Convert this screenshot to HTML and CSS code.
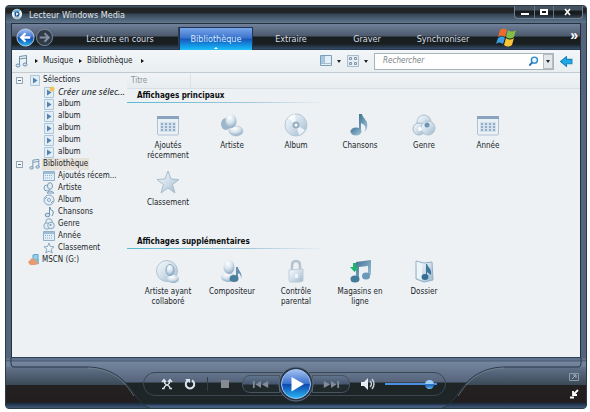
FILE: index.html
```html
<!DOCTYPE html>
<html lang="fr">
<head>
<meta charset="utf-8">
<title>Lecteur Windows Media</title>
<link rel="stylesheet" href="styles.css">
</head>
<body>
<svg class="defs" aria-hidden="true">
  <defs>
    <linearGradient id="pale" x1="0" y1="0" x2="1" y2="1"><stop offset="0" stop-color="#f8fcfe"/><stop offset=".5" stop-color="#d0deea"/><stop offset="1" stop-color="#9bb8ce"/></linearGradient>
    <linearGradient id="steel" x1="0" y1="0" x2="1" y2="1"><stop offset="0" stop-color="#3f7292"/><stop offset="1" stop-color="#a5c8de"/></linearGradient>
    <radialGradient id="ball" cx=".4" cy=".25" r=".8"><stop offset="0" stop-color="#fff"/><stop offset=".5" stop-color="#d5e2ec"/><stop offset="1" stop-color="#84a2bc"/></radialGradient>
    <linearGradient id="orb" x1="0" y1="0" x2="0" y2="1"><stop offset="0" stop-color="#a3c1f2"/><stop offset=".48" stop-color="#3c72cf"/><stop offset=".52" stop-color="#0d48b0"/><stop offset="1" stop-color="#28baf5"/></linearGradient>
    <linearGradient id="corner" x1="0" y1="0" x2="0" y2="1"><stop offset="0" stop-color="#62728a"/><stop offset=".42" stop-color="#3c4a57"/><stop offset=".43" stop-color="#242122"/><stop offset=".84" stop-color="#221e20"/><stop offset=".87" stop-color="#1d2f48"/><stop offset="1" stop-color="#4a607e"/></linearGradient>
    <symbol id="calendar" viewBox="0 0 24 24"><rect x="1.500" y="4" width="21" height="18" rx="1" fill="#e9f0f6" stroke="#b2c2d1"/><path d="M1 3h22v3H1z" fill="#8ba3bc"/><path d="M4 9h16v10H4z" fill="#d4e2ee"/><path d="M5 11h14M5 14h14M5 17h14" stroke="#7f9ab8" stroke-width="1.500" stroke-dasharray="2 2"/></symbol>
    <symbol id="person" viewBox="0 0 24 24"><ellipse cx="6" cy="11" rx="5" ry="6" fill="#9db5c9"/><ellipse cx="16" cy="18" rx="7" ry="5" fill="url(#ball)" stroke="#a9bdce" stroke-width=".5"/><ellipse cx="11" cy="8" rx="5.500" ry="7" fill="url(#ball)"/></symbol>
    <symbol id="disc" viewBox="0 0 24 24"><circle cx="12" cy="12" r="11" fill="url(#pale)" stroke="#b5c8d5"/><path d="M12 12L4 5a11 11 0 0 1 7-4zM12 12l9 5a11 11 0 0 1-6 5z" fill="#fff" opacity=".75"/><circle cx="12" cy="12" r="3.500" fill="#97afc2"/><circle cx="12" cy="12" r="1.500" fill="#f5f9fb"/></symbol>
    <symbol id="note" viewBox="0 0 24 24"><path d="M11 1h3c1 5 7 6 5 14l-2 4c1-6 0-7-4-9v8h-2z" fill="url(#steel)"/><ellipse cx="8" cy="18.500" rx="5.500" ry="4" fill="url(#steel)"/></symbol>
    <symbol id="genre" viewBox="0 0 24 24"><circle cx="12" cy="9" r="7" fill="url(#pale)" stroke="#b0c2d0"/><circle cx="7" cy="16" r="6" fill="url(#pale)" stroke="#a3bacc"/><circle cx="16" cy="15" r="7" fill="url(#pale)" stroke="#b0c2d0"/><circle cx="15" cy="12" r="2.500" fill="#6c94b3"/><circle cx="8" cy="16" r="2" fill="#fff"/></symbol>
    <symbol id="star" viewBox="0 0 24 24"><path d="M12 1l3 8 8 .5-6.500 5L19 23l-7-5-7 5 2.500-8.500L1 9.500 9 9z" fill="url(#pale)" stroke="#a9bccb" stroke-linejoin="round"/></symbol>
    <symbol id="collab" viewBox="0 0 24 24"><circle cx="11" cy="12" r="10.500" fill="url(#pale)" stroke="#b2c4d2"/><ellipse cx="17" cy="20" rx="6" ry="4" fill="url(#ball)"/><ellipse cx="14" cy="11" rx="4" ry="5.500" fill="url(#ball)" stroke="#88a9c3"/></symbol>
    <symbol id="composer" viewBox="0 0 24 24"><ellipse cx="8" cy="18" rx="7" ry="5" fill="url(#ball)"/><ellipse cx="9" cy="8" rx="5.500" ry="7" fill="url(#ball)"/><path d="M16 8h2c0 4 5 5 3 12 0-4-1-5-3-6v5h-2z" fill="#648fae"/><ellipse cx="14" cy="19.500" rx="4.500" ry="3.500" fill="#497d9d"/></symbol>
    <symbol id="lock" viewBox="0 0 24 24"><path d="M8 12V7q0-5 4-5t4 5v5" fill="none" stroke="#b4c2cd" stroke-width="2.500"/><path d="M5 11l14-1v12l-3 1H6l-1-2z" fill="url(#pale)" stroke="#c0ccd5"/><path d="M11 15h3v4h-3z" fill="#eef5fa"/></symbol>
    <symbol id="notes" viewBox="0 0 24 24"><path d="M8 3l15-2v15h-3V7l-9 1v12H8z" fill="url(#steel)"/><ellipse cx="7" cy="20" rx="4.500" ry="3.500" fill="#467a9b"/><ellipse cx="18" cy="17" rx="4" ry="3.500" fill="#6998b8"/></symbol>
    <symbol id="shop" viewBox="0 0 24 24"><use href="#notes"/><path d="M5 4h3v4h3l-4.500 5L2 8h3z" fill="#20b370"/></symbol>
    <symbol id="folder" viewBox="0 0 24 24"><path d="M4 2l8 2 8-1 1 18-9 2-8-3z" fill="url(#pale)" stroke="#94afc5"/><path d="M5 3l5 3v15l-5-2z" fill="#eef5fa"/><path d="M14 5h1c1 4 5 4 4 11l-4-3v6h-1z" fill="#3d779b"/><ellipse cx="13" cy="18" rx="3.500" ry="3" fill="#356f94"/></symbol>
    <symbol id="list" viewBox="0 0 12 12"><path d="M1.500 1.500h9v10h-9z" fill="#e2edf6" stroke="#adc6da"/><path d="M4 3.500l4.500 3L4 9.500z" fill="#5382ad"/></symbol>
    <symbol id="s-cal" viewBox="0 0 12 12"><path d="M.5 1.500h11v9H.5z" fill="#e3eff8" stroke="#91b0cb"/><path d="M1 2h10v2H1z" fill="#9fbdd6"/><path d="M2 5.500h8M2 8h8" stroke="#91b0cb" stroke-dasharray="1 1"/></symbol>
    <symbol id="s-person" viewBox="0 0 12 12"><g fill="#e2edf5" stroke="#7b9cb8"><circle cx="4" cy="6" r="3"/><path d="M4 11q3-4 7 0z"/><ellipse cx="7" cy="4" rx="2.500" ry="3.300"/></g></symbol>
    <symbol id="s-disc" viewBox="0 0 12 12"><circle cx="6" cy="6" r="5" fill="#e2edf5" stroke="#86a6c1"/><circle cx="6" cy="6" r="1.500" fill="#fff" stroke="#86a6c1"/><path d="M2 5l2-2M8 9l2-2" stroke="#86a6c1"/></symbol>
    <symbol id="s-note" viewBox="0 0 12 12"><path d="M6.500 1v8M7 1q0 3 3 4 1 2-1 5" fill="none" stroke="#6e92b0"/><ellipse cx="4.500" cy="9" rx="2.300" ry="1.800" fill="#cddfeb" stroke="#6e92b0"/></symbol>
    <symbol id="s-genre" viewBox="0 0 12 12"><g fill="#e2edf5" stroke="#86a6c1"><circle cx="6" cy="4" r="3.300"/><circle cx="4" cy="8" r="3.200"/><circle cx="8" cy="7.500" r="3.300"/></g><circle cx="7.500" cy="7" r="1" fill="#7597b5"/></symbol>
    <symbol id="s-star" viewBox="0 0 12 12"><path d="M6 1l1.400 3.500 3.600.3-2.800 2.300 1 3.900L6 9l-3.200 2 1-3.900L1 4.800l3.600-.3z" fill="#edf4f8" stroke="#8ba8c0"/></symbol>
    <symbol id="beam" viewBox="0 0 14 14"><path d="M4.500 11V2.500l7-1V10M4.500 5l7-1" fill="none" stroke="#6a90ae"/><ellipse cx="3" cy="11.500" rx="2" ry="1.500" fill="#d3e2ec" stroke="#6a90ae"/><ellipse cx="10" cy="10.500" rx="2" ry="1.500" fill="#d3e2ec" stroke="#6a90ae"/></symbol>
  </defs>
</svg>

<div class="window">
  <header class="titlebar">
    <svg class="app-icon" viewBox="0 0 14 14"><circle cx="7" cy="7" r="6" fill="#e8f1f6"/><path d="M2 4a6 6 0 0 1 9-1L7 7z" fill="#6eb5d8"/><path d="M3 11a6 6 0 0 0 8 0L7 7z" fill="#a8bfcf"/><circle cx="7" cy="7" r="3" fill="#195aa0"/><path d="M6 5l3 2-3 2z" fill="#fff"/></svg>
    <h1 class="title">Lecteur Windows Media</h1>
    <div class="win-buttons">
      <button aria-label="Réduire"><svg viewBox="0 0 10 8"><path d="M1 6h8" stroke="#fff" stroke-width="2"/></svg></button>
      <button aria-label="Agrandir"><svg viewBox="0 0 10 8"><path d="M2 2h6v4H2z" fill="none" stroke="#fff" stroke-width="2"/></svg></button>
      <button class="close" aria-label="Fermer"><svg viewBox="0 0 10 8"><path d="M2 1l5 6M7 1L2 7" stroke="#fff" stroke-width="1.600"/></svg></button>
    </div>
  </header>

  <div class="frame">
    <nav class="tabs">
      <div class="history">
        <button class="back" aria-label="Précédent"><svg viewBox="0 0 20 20"><circle cx="10" cy="10" r="9" fill="url(#orb)" stroke="#bccbe2"/><path d="M15 10H6M10 5.500L5.500 10l4.500 4.500" fill="none" stroke="#fff" stroke-width="2.400"/></svg></button>
        <button class="forward" aria-label="Suivant"><svg viewBox="0 0 20 20"><circle cx="10" cy="10" r="8.500" fill="#303b48" stroke="#7f8da0"/><path d="M5 10h9M10 5.500l4.500 4.500-4.500 4.500" fill="none" stroke="#8492a2" stroke-width="2"/></svg></button>
      </div>
      <button class="tab playing">Lecture en cours</button>
      <button class="tab active">Bibliothèque</button>
      <button class="tab">Extraire</button>
      <button class="tab">Graver</button>
      <button class="tab">Synchroniser</button>
      <svg class="flag" viewBox="0 0 22 22"><path d="M5 4q4-3 7 0l-2 7q-4-3-7 0z" fill="#ee6c2b"/><path d="M13 4q4 3 8 0l-2 7q-4 3-8 0z" fill="#83bd45"/><path d="M3 12q4-3 7 0l-2 6q-4-3-7 0z" fill="#3b9ee4"/><path d="M11 12q4 3 8 0l-2 7q-4 3-8 0z" fill="#fac435"/></svg>
      <button class="more" aria-label="Plus">»</button>
    </nav>

    <div class="toolbar">
      <div class="crumbs">
        <svg class="crumb-icon"><use href="#beam"/></svg>
        <i class="chevron"></i><a href="#">Musique</a><i class="chevron"></i><a href="#">Bibliothèque</a><i class="chevron last"></i>
      </div>
      <div class="tools">
        <button class="tool" aria-label="Disposition"><svg viewBox="0 0 12 12"><path d="M.5.500h11v10H.5z" fill="#e4f0f8" stroke="#7c9fb8"/><path d="M1 1h3v7H1z" fill="#a5c9e1"/><path d="M4.500 1v7M1 8.500h10" stroke="#a5c0d3"/></svg><i class="down"></i></button>
        <button class="tool view" aria-label="Affichage"><svg viewBox="0 0 12 12"><path d="M.5.500h11v11H.5z" fill="#e4edf4" stroke="#a8bccb"/><path d="M2.500 2.500h2v2h-2zM7.500 2.500h2v2h-2zM2.500 7.500h2v2h-2zM7.500 7.500h2v2h-2z" fill="#d7e3ec" stroke="#8098ac"/></svg><i class="down"></i></button>
        <div class="search">
          <input type="text" placeholder="Rechercher" aria-label="Rechercher">
          <svg class="lens" viewBox="0 0 12 12"><circle cx="7" cy="4.500" r="3.300" fill="#e6f7fd" stroke="#2986c8" stroke-width="1.500"/><path d="M4.500 7L1.500 10.500" stroke="#2a70b0" stroke-width="2"/></svg>
          <button class="drop" aria-label="Options de recherche"><i class="down"></i></button>
        </div>
        <button class="tool arrow" aria-label="Afficher le volet"><svg viewBox="0 0 12 10"><path d="M6 .5v2.500h5v4H6v2.500L.5 5z" fill="#21a9e4" stroke="#1785bf"/></svg></button>
      </div>
    </div>

    <main class="content">
      <aside class="tree">
        <ul>
          <li class="root"><i class="toggle"></i><svg><use href="#list"/></svg><span>Sélections</span></li>
          <li><svg viewBox="0 0 12 12"><use href="#list"/><circle cx="9" cy="3" r="2.500" fill="#efc65a"/></svg><em>Créer une sélec...</em></li>
          <li><svg><use href="#list"/></svg>album</li>
          <li><svg><use href="#list"/></svg>album</li>
          <li><svg><use href="#list"/></svg>album</li>
          <li><svg><use href="#list"/></svg>album</li>
          <li><svg><use href="#list"/></svg>album</li>
          <li class="root"><i class="toggle"></i><svg><use href="#beam"/></svg><span class="selected">Bibliothèque</span></li>
          <li><svg><use href="#s-cal"/></svg>Ajoutés récem...</li>
          <li><svg><use href="#s-person"/></svg>Artiste</li>
          <li><svg><use href="#s-disc"/></svg>Album</li>
          <li><svg><use href="#s-note"/></svg>Chansons</li>
          <li><svg><use href="#s-genre"/></svg>Genre</li>
          <li><svg><use href="#s-cal"/></svg>Année</li>
          <li><svg><use href="#s-star"/></svg>Classement</li>
          <li class="root device"><svg viewBox="0 0 12 12"><path d="M5 1l5-1v6H5z" fill="#93d0ed" stroke="#59a0c5"/><path d="M4 6l7-1v5l-6 1z" fill="#8db3c8"/><path d="M0 8l4-4 3 2 3 3-3 2H2z" fill="#e99b6b"/></svg><span>MSCN (G:)</span></li>
        </ul>
      </aside>
      <section class="views">
        <div class="column-head"><span>Titre</span></div>
        <h2>Affichages principaux</h2>
        <div class="grid main-views">
          <a href="#"><svg><use href="#calendar"/></svg>Ajoutés récemment</a>
          <a href="#"><svg><use href="#person"/></svg>Artiste</a>
          <a href="#"><svg><use href="#disc"/></svg>Album</a>
          <a href="#"><svg><use href="#note"/></svg>Chansons</a>
          <a href="#"><svg><use href="#genre"/></svg>Genre</a>
          <a href="#"><svg><use href="#calendar"/></svg>Année</a>
          <a href="#"><svg><use href="#star"/></svg>Classement</a>
        </div>
        <h2>Affichages supplémentaires</h2>
        <div class="grid">
          <a href="#"><svg><use href="#collab"/></svg>Artiste ayant collaboré</a>
          <a href="#"><svg><use href="#composer"/></svg>Compositeur</a>
          <a href="#"><svg><use href="#lock"/></svg>Contrôle parental</a>
          <a href="#"><svg><use href="#shop"/></svg>Magasins en ligne</a>
          <a href="#"><svg><use href="#folder"/></svg>Dossier</a>
        </div>
      </section>
    </main>
  </div>

  <footer class="player">
    <svg class="corner left" viewBox="0 0 146 51"><path d="M0 9H82C111 10 122 27 129 37Q136 48 146 51H0z" fill="url(#corner)"/><path d="M5 0v6q0 3 3 3H82C111 10 122 27 129 37Q136 48 146 51" fill="none" stroke="#283849"/><path d="M82 10C111 11 121 28 128 38" fill="none" stroke="#7b8794" stroke-width=".7"/></svg>
    <svg class="corner right" viewBox="0 0 146 51"><path d="M146 9H64C35 10 24 27 17 37Q10 48 0 51H146z" fill="url(#corner)"/><path d="M141 0v6q0 3-3 3H64C35 10 24 27 17 37Q10 48 0 51" fill="none" stroke="#283849"/><path d="M64 10C35 11 25 28 18 38" fill="none" stroke="#7b8794" stroke-width=".7"/></svg>
    <div class="controls">
      <button class="shuffle" aria-label="Lecture aléatoire"><svg viewBox="0 0 12 12"><path d="M3 2q0 4 3 5t3 3.500h2M9 2q0 4-3 5t-3 3.500H1M1 4l2-2.500L5 4M11 4L9 1.500 7 4" fill="none" stroke="#dce5ee" stroke-width="1.300"/></svg></button>
      <button class="repeat" aria-label="Répéter"><svg viewBox="0 0 12 12"><path d="M4 2.500a4.200 4.200 0 1 0 4 0" fill="none" stroke="#dce5ee" stroke-width="2"/><path d="M1 1h5v4z" fill="#dce5ee"/></svg></button>
      <i class="divider"></i>
      <button class="stop" aria-label="Arrêter"><svg viewBox="0 0 12 12"><path d="M2 2h8v8H2z" fill="#858b91"/></svg></button>
      <div class="transport">
        <button class="skip prev" aria-label="Précédent"><svg viewBox="0 0 20 10"><path d="M1 1h2v8H1zM10 1v8L4 5zM18 1v8l-7-4z" fill="#828c99"/></svg></button>
        <button class="play" aria-label="Lecture"><svg viewBox="0 0 36 36"><circle cx="18" cy="18" r="17" fill="#26364a" stroke="#64758a"/><circle cx="18" cy="18" r="14.500" fill="url(#orb)" stroke="#a6c4ee"/><path d="M13.500 11L26 18l-12.500 7.500z" fill="#fff"/></svg></button>
        <button class="skip next" aria-label="Suivant"><svg viewBox="0 0 20 10"><path d="M17 1h2v8h-2zM10 1v8l6-4zM2 1v8l7-4z" fill="#828c99"/></svg></button>
      </div>
      <button class="mute" aria-label="Muet"><svg viewBox="0 0 14 12"><path d="M0 4h3l4-4v12L3 8H0z" fill="#e6edf4"/><path d="M9 3q3 3 0 6M11 1q4 5 0 10" fill="none" stroke="#c7d2dc" stroke-width="1.400"/></svg></button>
      <input class="volume" type="range" min="0" max="100" value="95" aria-label="Volume">
    </div>
    <div class="modes">
      <button aria-label="Plein écran"><svg viewBox="0 0 10 10"><path d="M.5 1.500h9v7h-9z" fill="none" stroke="#8d9aa8"/><path d="M4 3h3v3M7 3L3 7" fill="none" stroke="#a4b0bc"/></svg></button>
      <button aria-label="Mode réduit"><svg viewBox="0 0 10 10"><path d="M9 1L5 5M4 2v4h4" fill="none" stroke="#fff" stroke-width="1.800"/><path d="M1 8.500h4" stroke="#fff" stroke-width="2"/></svg></button>
    </div>
  </footer>
</div>
</body>
</html>
```
FILE: styles.css
```css
* { box-sizing: border-box; }
body {
  margin: 0;
  padding: 5px 3px 3px 5px;
  min-height: 100vh;
  display: flex;
  background: #fff;
  color: #202428;
  font: 8px/12px "DejaVu Sans Condensed", "DejaVu Sans", sans-serif;
}
button { border: 0; padding: 0; margin: 0; background: none; font: inherit; color: inherit; display: flex; align-items: center; justify-content: center; }
svg { display: block; flex: none; }
a { color: inherit; text-decoration: none; }
h1, h2, ul { margin: 0; padding: 0; font-size: inherit; }
.defs { position: absolute; width: 0; height: 0; }

.window {
  flex: 1;
  min-width: 0;
  display: flex;
  flex-direction: column;
  background: #53657c;
  border: 1px solid #2c3b49;
  border-radius: 4px;
  overflow: hidden;
}
.titlebar {
  height: 17px;
  display: flex;
  align-items: flex-start;
  background: linear-gradient(#41525f 0 1px, #222526 2px 7px, #344553 8px, #5f7790 17px);
  padding-left: 5px;
}
.app-icon { width: 12px; height: 12px; margin-top: 2px; }
.title { margin-left: 6px; line-height: 18px; font-weight: normal; font-size: 9px; color: #e0e5ea; }
.win-buttons { display: flex; margin: 0 3px 0 auto; height: 13px; border: 1px solid #71808e; border-top: 0; border-radius: 0 0 4px 4px; background: linear-gradient(#44515e 0 4px, #171c1f 5px 8px, #39485a); }
.win-buttons button { width: 19px; }
.win-buttons button + button { border-left: 1px solid #647484; }
.win-buttons .close { width: 29px; }
.win-buttons svg { width: 10px; height: 8px; }

.frame { flex: 1; display: flex; flex-direction: column; margin: 0 5px; border: 1px solid #25313e; border-bottom-color: #2c405a; }
.tabs {
  height: 26px;
  display: flex;
  align-items: center;
  background: linear-gradient(#71819a, #4c596d 12px, #191f20 13px 20px, #344b68 25px, #1c2936);
}
.history { display: flex; align-items: center; width: 50px; padding-left: 4px; }
.history svg { width: 19px; height: 19px; }
.tab { width: 76px; height: 23px; align-self: flex-end; color: #d6dde5; font-size: 9px; }
.playing { width: 117px; border-right: 1px solid #313d4c; }
.active {
  width: 74px;
  position: relative;
  border: 1px solid #1d3459;
  border-bottom: 0;
  color: #dcecff;
  background: linear-gradient(#78a5e8, #3b74cd 45%, #1957b9 50%, #13a8f0 88%, #24c0f5);
}
.active::after { content: ""; position: absolute; bottom: 1px; left: 50%; margin-left: -2px; border: 2px solid transparent; border-top: 0; border-bottom-color: #fff; }
.flag { width: 22px; height: 22px; margin-left: 14px; }
.more { margin: 0 2px 4px auto; font: bold 14px/20px "Liberation Sans", sans-serif; color: #fff; }

.toolbar { height: 23px; display: flex; align-items: center; background: linear-gradient(#f2f6f8, #e9eef1); border-bottom: 1px solid #c2cbd2; }
.crumbs { display: flex; align-items: center; padding-left: 3px; }
.crumb-icon { width: 14px; height: 14px; }
.chevron { border: 2px solid transparent; border-left: 3px solid #111; border-right: 0; margin: 0 5px 0 6px; }
.crumbs .last { margin-left: 9px; }
.tools { display: flex; align-items: center; margin-left: auto; padding-right: 7px; }
.tool { gap: 5px; }
.tool svg { width: 12px; height: 12px; }
.view { margin: 0 4px 0 6px; }
.down { border: 2px solid transparent; border-top: 3px solid #222; border-bottom: 0; }
.search { display: flex; align-items: center; width: 180px; height: 17px; margin: 0 6px 0 2px; background: #fff; border: 1px solid #a8b3bb; }
.search input { flex: 1; min-width: 0; border: 0; padding: 0 8px; background: none; font: italic 8px/14px "DejaVu Sans Condensed", "DejaVu Sans", sans-serif; outline: 0; }
.search input::placeholder { color: #7b8186; opacity: 1; }
.lens { width: 11px; height: 11px; margin-right: 4px; }
.drop { width: 10px; height: 15px; border: 1px solid #b6bdc2; background: #e4e8ea; }
.tools .arrow svg { width: 13px; height: 11px; }

.content { flex: 1; display: grid; grid-template-columns: 115px 1fr; background: #edf1f4; }
.tree { padding-top: 1px; overflow: hidden; }
.tree ul { list-style: none; }
.tree li { height: 12px; display: flex; align-items: center; padding-left: 31px; gap: 3px; white-space: nowrap; }
.tree svg { width: 12px; height: 12px; }
.tree .root { padding-left: 4px; gap: 2px; }
.tree .root svg { margin-left: 4px; }
.tree .device { padding-left: 12px; }
.tree em { font-family: "Noto Sans", "Open Sans", sans-serif; font-size: 9px; }
.toggle { width: 7px; height: 7px; border: 1px solid #94a7b7; background: linear-gradient(#59718a, #59718a) center / 3px 1px no-repeat #f6f9fb; }
.selected { background: #e7e2d9; padding: 0 1px; margin-left: -1px; }
.views { min-width: 0; }
.column-head { height: 16px; display: flex; background: linear-gradient(#f1f4f6, #e7ecef); border-bottom: 1px solid #d8dfe4; color: #8b949b; }
.column-head span { padding: 2px 4px; width: 64px; border-right: 1px solid #dce2e6; }
.views h2 { height: 14px; padding: 1px 10px 0; line-height: 12px; font-weight: bold; color: #0b0d0e; border-bottom: 1px solid; border-image: linear-gradient(90deg, #56b9d1, #a3c7dc 120px, #edf1f4 200px) 1; }
.grid { display: grid; grid-template-columns: repeat(auto-fill, 64px); padding: 10px 0 0 9px; }
.grid a { display: flex; flex-direction: column; align-items: center; text-align: center; padding: 0 4px; line-height: 10px; min-height: 57px; }
.grid svg { width: 24px; height: 24px; margin-bottom: 4px; }
.main-views { grid-template-columns: repeat(6, 64px); min-height: 132px; align-content: start; }

.player {
  height: 50px;
  position: relative;
  display: grid;
  grid-template-columns: 1fr auto 1fr;
  background: linear-gradient(#60738b 0 2px, #465a72 3px, #74869f 4px, #56657c 24px, #1d2527 25px 45px, #1b2d45 46px, #415a7b 48px, #49617f);
}
.corner { position: absolute; top: 0; width: 146px; height: 51px; }
.left { left: 0; }
.right { right: 0; }
.controls {
  grid-column: 2;
  align-self: start;
  display: flex;
  align-items: center;
  width: 303px;
  height: 24px;
  margin: 14px 4px 0 0;
  padding-left: 17px;
  border: 1px solid #3b4854;
  border-radius: 12px;
}
.controls svg { width: 12px; height: 12px; }
.repeat { margin-left: 11px; }
.divider { width: 1px; height: 14px; background: #343d43; margin: 0 11px 0 11px; }
.transport { display: flex; align-items: center; margin: 0 11px 0 11px; }
.skip { width: 38px; height: 18px; border: 1px solid #48545f; background: linear-gradient(#60738c, #46576f 8px, #20292c 9px); }
.prev { border-radius: 8px 0 0 8px; }
.next { border-radius: 0 8px 8px 0; }
.controls .skip svg { width: 18px; height: 9px; }
.play { margin: -6px -2px; position: relative; }
.controls .play svg { width: 36px; height: 36px; }
.controls .mute svg { width: 14px; height: 12px; }
.volume { appearance: none; width: 52px; height: 12px; margin: 0 0 0 10px; background: linear-gradient(#4c90e6, #4c90e6) center / 100% 2px no-repeat; }
.volume::-webkit-slider-thumb { appearance: none; width: 9px; height: 9px; border-radius: 5px; background: linear-gradient(#9ccdf8 4px, #2473c5 4px 6px, #7bc0f6); }
.modes { position: relative; display: flex; flex-direction: column; align-items: flex-end; gap: 7px; padding: 14px 7px 0 0; }
.modes svg { width: 10px; height: 10px; }
```
